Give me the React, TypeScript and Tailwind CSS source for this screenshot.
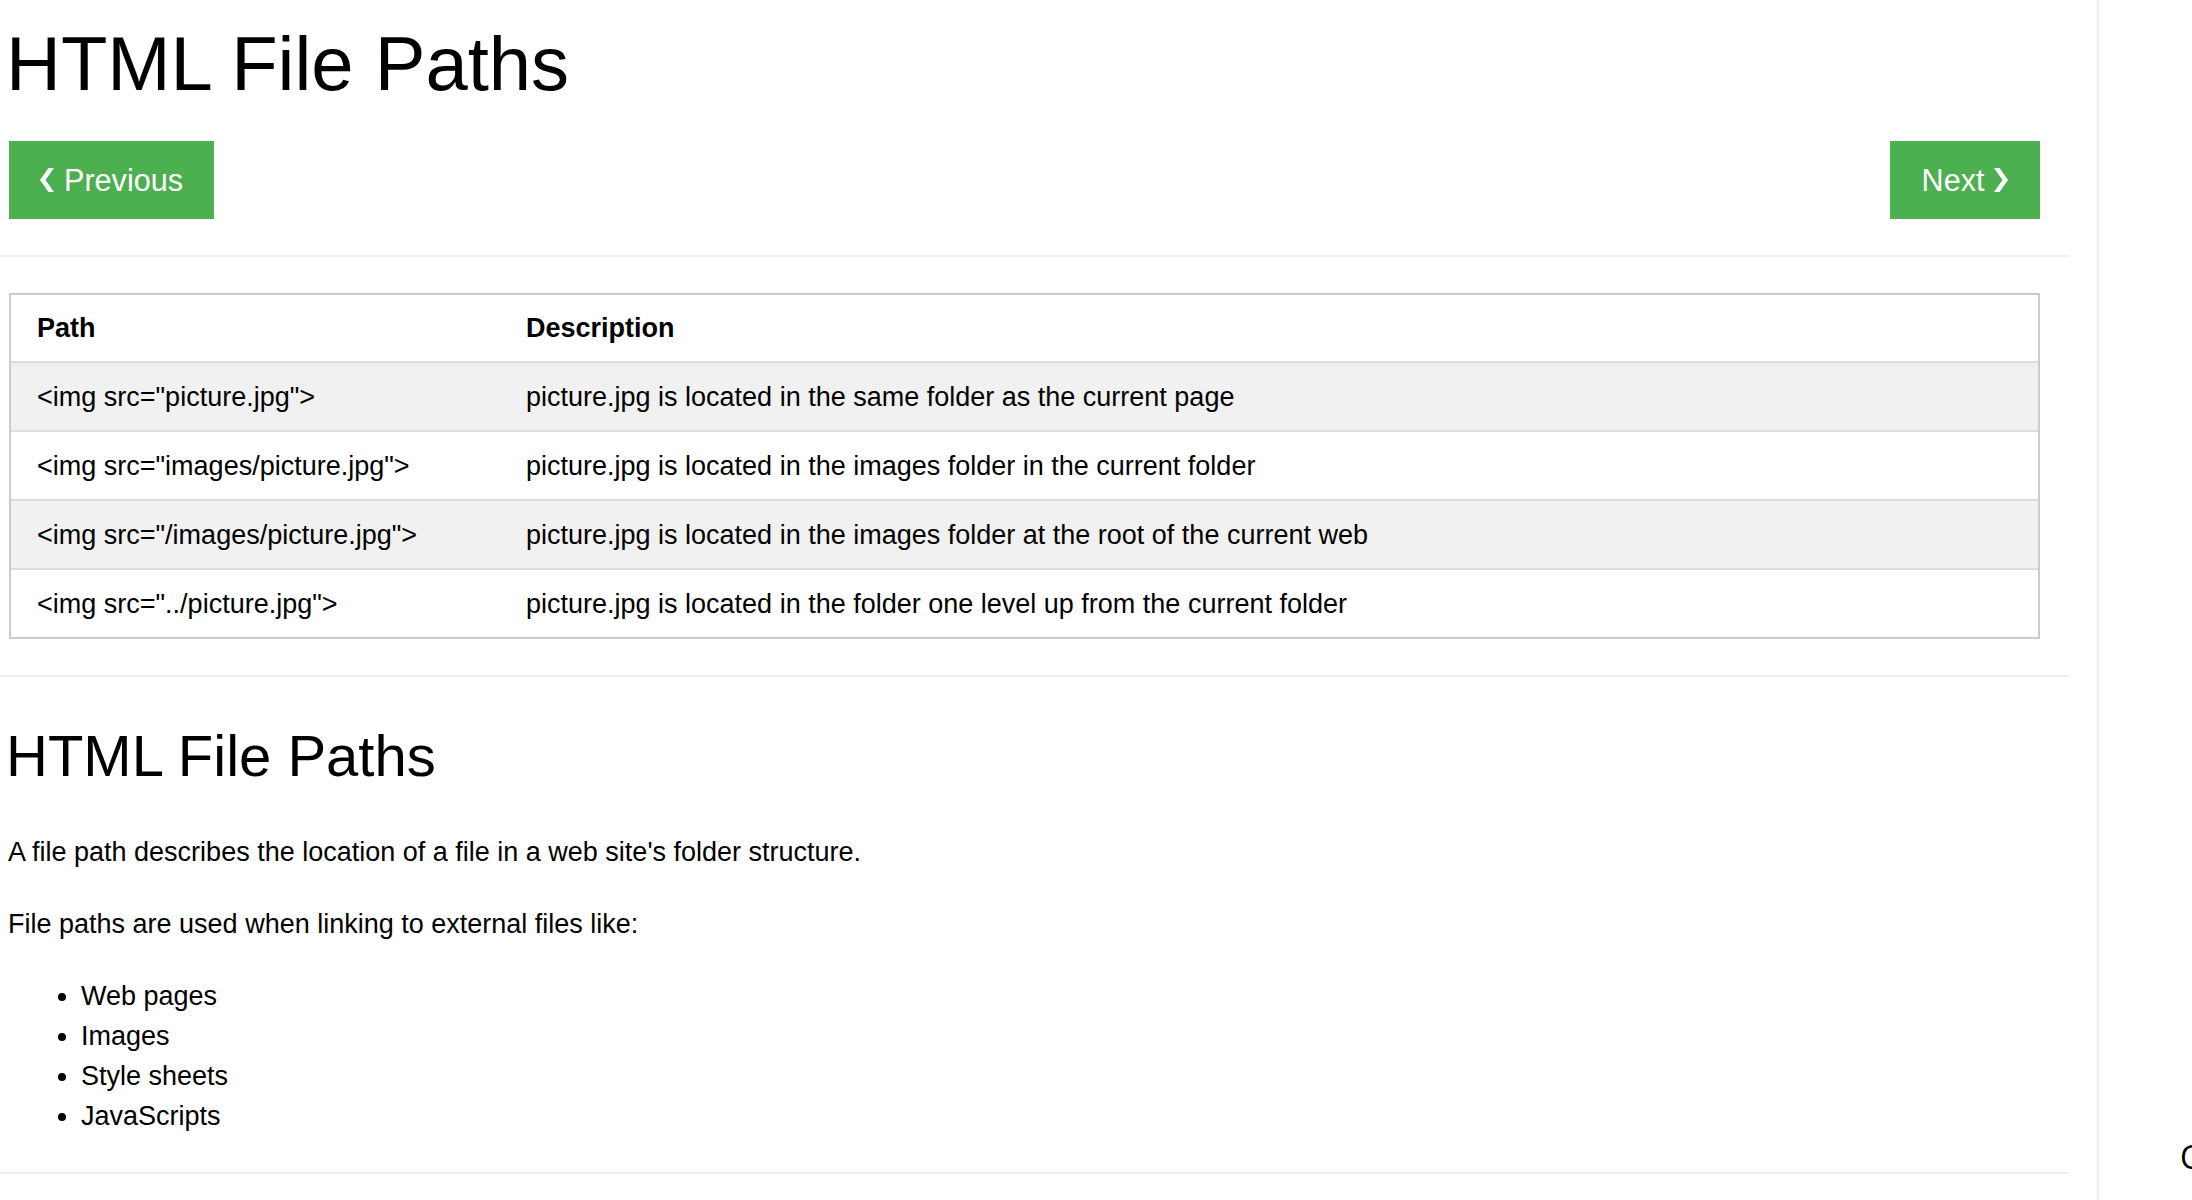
const rows: [string, string][] = [
  ['<img src="picture.jpg">', "picture.jpg is located in the same folder as the current page"],
  ['<img src="images/picture.jpg">', "picture.jpg is located in the images folder in the current folder"],
  ['<img src="/images/picture.jpg">', "picture.jpg is located in the images folder at the root of the current web"],
  ['<img src="../picture.jpg">', "picture.jpg is located in the folder one level up from the current folder"],
];

const items = ["Web pages", "Images", "Style sheets", "JavaScripts"];

function Rule() {
  return <div className="h-[2px] bg-[#eeeeee]" />;
}

// heavy angle ornament, like ❮ / ❯
function Chevron({ dir }: { dir: "left" | "right" }) {
  const pts = dir === "left" ? "14,0 8.5,0 0,12 8.5,24 14,24 5.5,12" : "0,0 5.5,0 14,12 5.5,24 0,24 8.5,12";
  return (
    <svg width="14" height="24" viewBox="0 0 14 24" className="shrink-0" aria-hidden>
      <polygon points={pts} fill="white" />
    </svg>
  );
}

export default function App() {
  return (
    <div className="flex h-screen overflow-hidden bg-white text-black font-['Liberation_Sans','DejaVu_Sans',Arial,sans-serif]">
      {/* main column */}
      <div className="w-[2097px] shrink-0">
        <div className="w-[2069px]">
          <div className="pl-[8px] pr-[29px]">
            <h1 className="-ml-[2px] mt-[26px] text-[76px] font-normal leading-[76px]">HTML File Paths</h1>

            <div className="mt-[39px] flex justify-between pl-px">
              <a
                href="#"
                className="flex h-[78px] w-[205px] items-center justify-center gap-[10px] bg-[#4CAF50] text-[30.6px] leading-[45px] text-white"
              >
                <Chevron dir="left" />
                <span>Previous</span>
              </a>
              <a
                href="#"
                className="flex h-[78px] w-[150px] items-center justify-center gap-[10px] bg-[#4CAF50] text-[30.6px] leading-[45px] text-white"
              >
                <span>Next</span>
                <Chevron dir="right" />
              </a>
            </div>
          </div>

          <div className="mt-[36px]">
            <Rule />
          </div>

          {/* table */}
          <div className="mt-[36px] pl-[9px] pr-[29px]">
            <div className="border-2 border-[#cccccc] text-[27px] leading-[40px]">
              <div className="flex h-[66px] items-center font-bold">
                <div className="w-[501px] shrink-0 pl-[26px]">Path</div>
                <div className="pl-[14px]">Description</div>
              </div>
              {rows.map(([path, desc], i) => (
                <div
                  key={path}
                  className={`flex h-[69px] items-center border-t-2 border-[#dddddd] ${i % 2 === 0 ? "bg-[#f1f1f1]" : "bg-white"}`}
                >
                  <div className="w-[501px] shrink-0 pl-[26px]">{path}</div>
                  <div className="pl-[14px]">{desc}</div>
                </div>
              ))}
            </div>
          </div>

          <div className="mt-[36px]">
            <Rule />
          </div>

          {/* intro */}
          <div className="pl-[8px] pr-[29px]">
            <h2 className="-ml-[2px] mt-[50px] text-[58px] font-normal leading-[58px]">HTML File Paths</h2>
            <p className="mt-[47px] text-[27px] leading-[40px]">
              A file path describes the location of a file in a web site's folder structure.
            </p>
            <p className="mt-[32px] text-[27px] leading-[40px]">File paths are used when linking to external files like:</p>
            <ul className="mt-[32px] list-disc pl-[73px] text-[27px] leading-[40px]">
              {items.map((t) => (
                <li key={t}>{t}</li>
              ))}
            </ul>
          </div>

          <div className="mt-[36px]">
            <Rule />
          </div>
        </div>
      </div>

      {/* right sidebar */}
      <div className="flex min-w-0 flex-1 flex-col justify-end overflow-hidden border-l-2 border-[#eeeeee] pb-[27px]">
        <div className="whitespace-nowrap pl-[81px] text-[32px] leading-[32px] font-['Open_Sans',sans-serif]">COLOR PICKER</div>
      </div>
    </div>
  );
}
